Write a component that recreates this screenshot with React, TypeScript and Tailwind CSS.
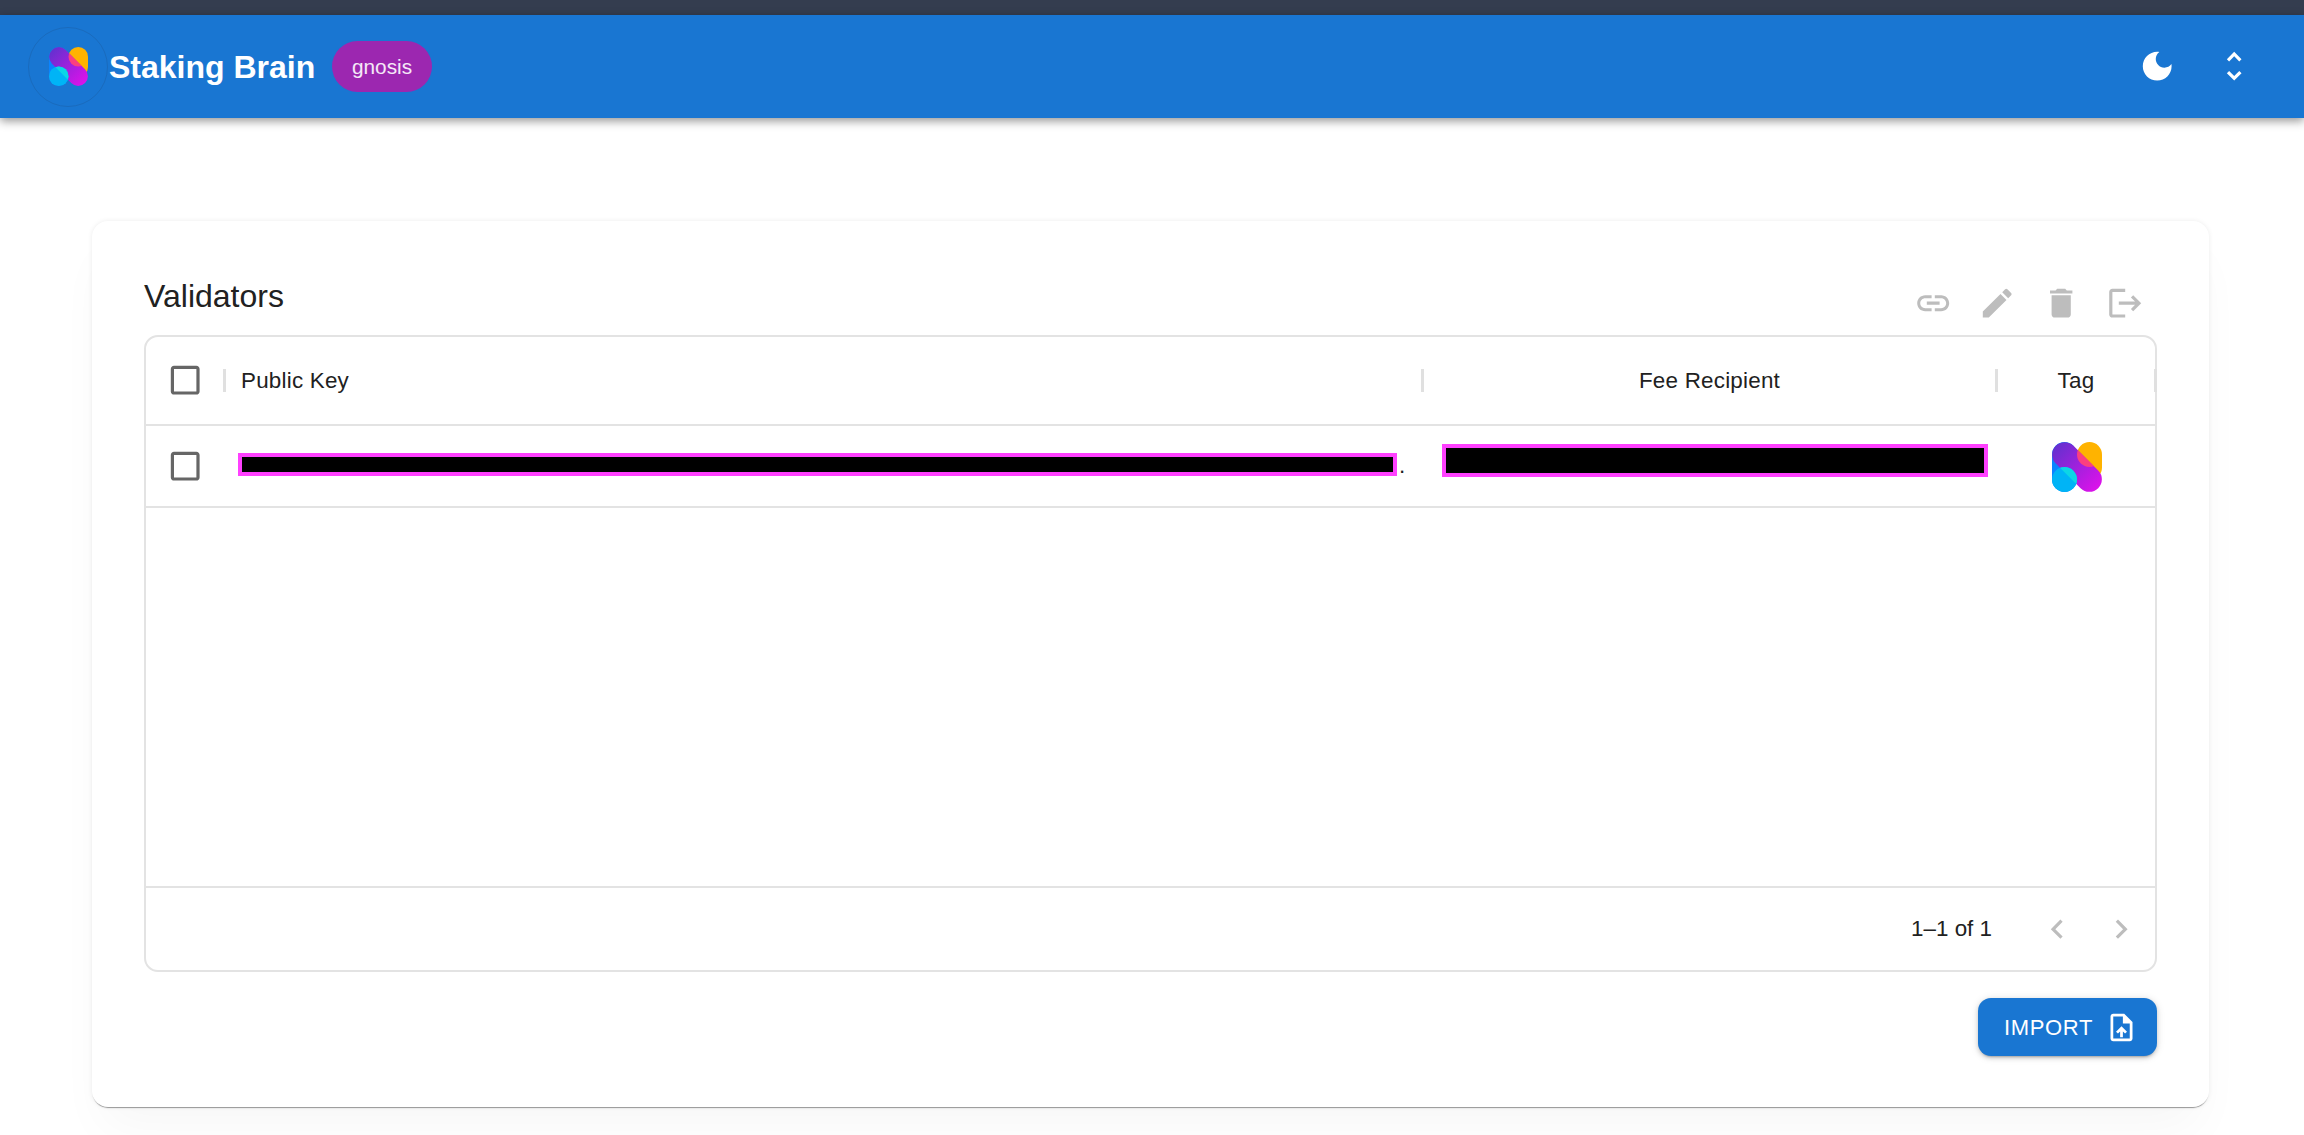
import React from "react";

function MuiIcon({ d, className }: { d: string; className: string }) {
  return (
    <svg viewBox="0 0 24 24" fill="currentColor" className={className}>
      <path d={d} />
    </svg>
  );
}

const paths = {
  link: "M3.9 12c0-1.71 1.39-3.1 3.1-3.1h4V7H7c-2.76 0-5 2.24-5 5s2.24 5 5 5h4v-1.9H7c-1.71 0-3.1-1.39-3.1-3.1zM8 13h8v-2H8v2zm9-6h-4v1.9h4c1.71 0 3.1 1.39 3.1 3.1s-1.39 3.1-3.1 3.1h-4V17h4c2.76 0 5-2.24 5-5s-2.24-5-5-5z",
  edit: "M3 17.25V21h3.75L17.81 9.94l-3.75-3.75L3 17.25zM20.71 7.04c.39-.39.39-1.02 0-1.41l-2.34-2.34a.9959.9959 0 0 0-1.41 0l-1.83 1.83 3.75 3.75 1.83-1.83z",
  trash: "M6 19c0 1.1.9 2 2 2h8c1.1 0 2-.9 2-2V7H6v12zM19 4h-3.5l-1-1h-5l-1 1H5v2h14V4z",
  logout: "m17 7-1.41 1.41L18.17 11H8v2h10.17l-2.58 2.58L17 17l5-5zM4 5h8V3H4c-1.1 0-2 .9-2 2v14c0 1.1.9 2 2 2h8v-2H4V5z",
  moon: "M12 3c-4.97 0-9 4.03-9 9s4.03 9 9 9 9-4.03 9-9c0-.46-.04-.92-.1-1.36-.98 1.37-2.58 2.26-4.4 2.26-2.98 0-5.4-2.42-5.4-5.4 0-1.81.89-3.42 2.26-4.4-.44-.06-.9-.1-1.36-.1z",
  unfold: "M12 5.83 15.17 9l1.41-1.41L12 3 7.41 7.59 8.83 9 12 5.83zm0 12.34L8.83 15l-1.41 1.41L12 21l4.59-4.59L15.17 15 12 18.17z",
  upload: "M14 2H6c-1.1 0-1.99.9-1.99 2L4 20c0 1.1.89 2 1.99 2H18c1.1 0 2-.9 2-2V8l-6-6zm4 18H6V4h7v5h5v11zM8 15.01l1.41 1.41L11 14.84V19h2v-4.16l1.59 1.59L16 15.01 12.01 11z",
  left: "M15.41 7.41 14 6l-6 6 6 6 1.41-1.41L10.83 12z",
  right: "M10 6 8.59 7.41 13.17 12l-4.58 4.59L10 18l6-6z",
  box: "M19 5v14H5V5h14m0-2H5c-1.1 0-2 .9-2 2v14c0 1.1.9 2 2 2h14c1.1 0 2-.9 2-2V5c0-1.1-.9-2-2-2z",
};

function BrainLogo({ id, className }: { id: string; className: string }) {
  return (
    <svg viewBox="0 0 50 50" className={className}>
      <defs>
        <linearGradient id={`${id}-g`} x1="0" y1="0" x2="1" y2="0">
          <stop offset="0" stopColor="#6530cf" />
          <stop offset="1" stopColor="#dc12ea" />
        </linearGradient>
        <clipPath id={`${id}-a`}>
          <polygon points="17.7,0 50,32.3 50,50 0,50 0,0" />
        </clipPath>
        <clipPath id={`${id}-b`}>
          <polygon points="0,17.7 32.3,50 50,50 50,0 0,0" />
        </clipPath>
      </defs>
      <rect x="0" y="0" width="25" height="50" rx="12.5" fill="#0a84ff" />
      <rect x="25" y="0" width="25" height="38" rx="12.5" fill="#ffb300" />
      <rect
        x="-5"
        y="12.5"
        width="60"
        height="25"
        rx="12.5"
        fill={`url(#${id}-g)`}
        transform="rotate(45 25 25)"
      />
      <circle cx="37.5" cy="12.5" r="12.5" fill="#fb3f80" clipPath={`url(#${id}-a)`} />
      <circle cx="12.5" cy="37.5" r="12.5" fill="#00b4f6" />
      <circle cx="12.5" cy="37.5" r="12.5" fill="#0cd6e6" clipPath={`url(#${id}-b)`} />
    </svg>
  );
}

function Redacted({ className }: { className: string }) {
  return <div className={`border-4 border-[#ff40ff] bg-black ${className}`} />;
}

function Separator({ className = "" }: { className?: string }) {
  return <span className={`h-[23px] w-[3px] shrink-0 bg-[#e0e0e0] ${className}`} />;
}

export default function App() {
  return (
    <div className="flex h-screen flex-col overflow-hidden bg-white font-['Liberation_Sans',sans-serif] text-[#212121]">
      <div className="h-[15px] shrink-0 bg-[#343d4f]" />

      <header className="relative z-10 flex h-[103px] shrink-0 items-center bg-[#1976d2] pl-[28px] pr-[51px] text-white shadow-[0_3px_9px_rgba(0,0,0,0.42)]">
        <div className="flex h-[80px] w-[80px] items-center justify-center rounded-full border border-[#1a6bbd]">
          <BrainLogo id="head" className="h-[39px] w-[39px]" />
        </div>
        <h1 className="ml-px w-[207px] whitespace-nowrap text-[32px] font-bold leading-none">Staking Brain</h1>
        <span className="ml-4 flex h-[51px] w-[100px] items-center justify-center rounded-full bg-[#9c27b0] text-[20.8px] text-white/90">
          gnosis
        </span>
        <div className="ml-auto flex items-center gap-[38px]">
          <MuiIcon d={paths.moon} className="h-[38.4px] w-[38.4px]" />
          <MuiIcon d={paths.unfold} className="h-[38.4px] w-[38.4px]" />
        </div>
      </header>

      <main className="flex-1 px-[92px] pt-[103px]">
        <section className="h-[886px] w-[2117px] rounded-[16px] bg-white px-[52px] shadow-[0_2px_1px_-1px_rgba(0,0,0,0.38),0_0_5px_rgba(0,0,0,0.08),0_30px_50px_-10px_rgba(0,0,0,0.035)]">
          <div className="flex h-[114px] items-start justify-between pt-[50px]">
            <h2 className="text-[32px] leading-[51px]">Validators</h2>
            <div className="flex text-[#bdbdbd]">
              {[paths.link, paths.edit, paths.trash, paths.logout].map((d) => (
                <span key={d} className="flex h-[64px] w-[64px] items-center justify-center">
                  <MuiIcon d={d} className="h-[38.4px] w-[38.4px]" />
                </span>
              ))}
            </div>
          </div>

          <div className="flex h-[637px] flex-col rounded-[14px] border-2 border-[#e3e3e3] text-[22.4px]">
            <div className="flex h-[89px] shrink-0 items-center border-b-2 border-[#e3e3e3] tracking-[0.01em]">
              <div className="flex w-[80px] shrink-0 items-center justify-between pl-5 text-[#666666]">
                <MuiIcon d={paths.box} className="h-[38.4px] w-[38.4px]" />
                <Separator />
              </div>
              <div className="flex w-[1198px] shrink-0 items-center">
                <span className="flex-1 pl-[15px]">Public Key</span>
                <Separator />
              </div>
              <div className="flex w-[574px] shrink-0 items-center">
                <span className="flex-1 text-center">Fee Recipient</span>
                <Separator />
              </div>
              <div className="flex min-w-0 flex-1 items-center">
                <span className="flex-1 text-center">Tag</span>
                <Separator className="-mr-[2px]" />
              </div>
            </div>

            <div className="flex h-[82px] shrink-0 items-center border-b-2 border-[#e3e3e3]">
              <div className="w-[80px] shrink-0 pl-5 text-[#666666]">
                <MuiIcon d={paths.box} className="h-[38.4px] w-[38.4px]" />
              </div>
              <div className="flex w-[1198px] shrink-0 items-end pl-3">
                <Redacted className="-mt-[3px] h-[23px] w-[1159px]" />
                <span className="ml-[2px] leading-[20px]">.</span>
              </div>
              <div className="w-[574px] shrink-0 pl-[18px]">
                <Redacted className="-mt-[11px] h-[33px] w-[546px]" />
              </div>
              <div className="flex flex-1 justify-center pt-px">
                <BrainLogo id="row" className="h-[50px] w-[50px]" />
              </div>
            </div>

            <div className="flex-1" />

            <div className="flex h-[84px] shrink-0 items-center justify-end border-t-2 border-[#e3e3e3] pr-[2px]">
              <span className="mr-[33px]">1–1 of 1</span>
              {[paths.left, paths.right].map((d) => (
                <span key={d} className="flex h-[64px] w-[64px] items-center justify-center text-[#bdbdbd]">
                  <MuiIcon d={d} className="h-[38.4px] w-[38.4px]" />
                </span>
              ))}
            </div>
          </div>

          <div className="flex justify-end pt-[26px]">
            <button className="flex h-[58px] w-[179px] items-center rounded-[13px] bg-[#1976d2] pl-[26px] text-[22px] tracking-[0.03em] text-white shadow-[0_3px_2px_-2px_rgba(0,0,0,0.2),0_2px_4px_rgba(0,0,0,0.15),0_1px_8px_rgba(0,0,0,0.12)]">
              IMPORT
              <MuiIcon d={paths.upload} className="ml-[12px] h-[33px] w-[33px]" />
            </button>
          </div>
        </section>
      </main>
    </div>
  );
}
